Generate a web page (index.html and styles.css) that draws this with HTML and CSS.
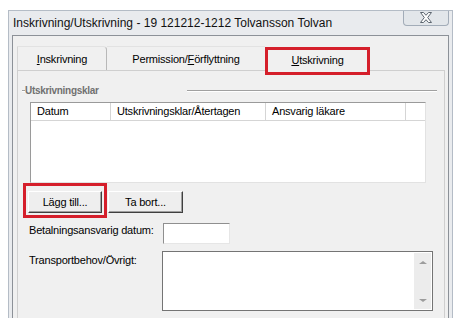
FILE: index.html
```html
<!DOCTYPE html>
<html lang="sv">
<head>
    <meta charset="UTF-8">
    <title>Inskrivning/Utskrivning</title>
    <link rel="stylesheet" href="styles.css">
</head>
<body>

    <div class="window">
        <div class="titlebar">
            <span class="title">Inskrivning/Utskrivning - 19 121212-1212 Tolvansson Tolvan</span>
            <div class="close">
                <svg width="14" height="11" viewBox="0 0 14 11">
                    <path d="M1.5 0.5 L4.5 0.5 L7 3.3 L9.5 0.5 L12.5 0.5 L8.7 5.5 L12.5 10.5 L9.5 10.5 L7 7.7 L4.5 10.5 L1.5 10.5 L5.3 5.5 Z" fill="#fff" stroke="#5d6670" stroke-width="1" stroke-linejoin="round"/>
                </svg>
            </div>
        </div>

        <div class="client">
            <div class="tabs">
                <div class="tab tab-first"><u>I</u>nskrivning</div>
                <div class="tab tab-second">Permission/<u>F</u>örflyttning</div>
                <div class="tab tab-active"><u>U</u>tskrivning</div>
            </div>

            <div class="panel">
                <div class="group-title">
                    <span class="dash"></span>
                    <span class="group-label">Utskrivningsklar</span>
                    <span class="rule"></span>
                </div>

                <div class="list">
                    <div class="list-header">
                        <div class="col col-date">Datum</div>
                        <div class="col col-status">Utskrivningsklar/Återtagen</div>
                        <div class="col col-doctor">Ansvarig läkare</div>
                        <div class="col col-fill"></div>
                    </div>
                </div>

                <div class="button-row">
                    <div class="highlight">
                        <button class="button btn-add">Lägg till...</button>
                    </div>
                    <button class="button btn-remove">Ta bort...</button>
                </div>

                <div class="form-row">
                    <label class="form-label">Betalningsansvarig datum:</label>
                    <div class="field field-date"></div>
                </div>

                <div class="form-row">
                    <label class="form-label label-transport">Transportbehov/Övrigt:</label>
                    <div class="memo">
                        <div class="scrollbar">
                            <span class="arrow-up"></span>
                            <span class="arrow-down"></span>
                        </div>
                    </div>
                </div>

                <div class="form-row">
                    <span class="form-label"></span>
                    <div class="field field-next"></div>
                </div>
            </div>
        </div>
    </div>

</body>
</html>
```

FILE: styles.css
```css
html, body {
    overflow: hidden;
}
body {
    margin: 0;
    background: #fff;
    font-family: "Liberation Sans", Arial, sans-serif;
    font-size: 11px;
    letter-spacing: -0.2px;
    color: #000;
}
.window {
    margin: 10px 0 0 8px;
    width: 445px;
    height: 308px;
    box-sizing: border-box;
    background: #e9ebee;
    border: 1px solid #b4bcc6;
    border-bottom: none;
    padding: 0 3px 0 3px;
    overflow: hidden;
}
.titlebar {
    height: 24px;
    display: flex;
    align-items: center;
}
.title {
    padding-left: 1px;
    font-size: 12px;
    letter-spacing: 0;
    color: #111;
}
.close {
    margin-left: auto;
    align-self: flex-start;
    margin-top: -1px;
    width: 46px;
    height: 16px;
    box-sizing: border-box;
    border: 1px solid #a2acb8;
    border-top: none;
    border-radius: 0 0 4px 4px;
    background: #e2e6ea;
    display: flex;
    align-items: center;
    justify-content: center;
}
.client {
    background: #f0f0f0;
    border: 1px solid #8c9198;
    border-bottom: none;
    height: 273px;
    padding: 10px 3px 0 4px;
    overflow: hidden;
}
.tabs {
    display: flex;
    height: 24px;
    align-items: flex-start;
}
.tab {
    height: 24px;
    box-sizing: border-box;
    display: flex;
    align-items: center;
    justify-content: center;
    padding-top: 1px;
}
.tab-first {
    width: 90px;
    border-left: 1px solid #d6d6d6;
    border-top: 1px solid #e2e2e2;
    border-right: 1px solid #b8b8b8;
    border-radius: 0 4px 0 0;
}
.tab-second {
    width: 158px;
    border-top: 1px solid #e2e2e2;
}
.tab-active {
    width: 105px;
    height: 28px;
    margin-top: 1px;
    border: 3px solid #d51f2b;
    background: #f0f0f0;
    position: relative;
    z-index: 1;
    padding-top: 0;
    padding-bottom: 2px;
}
.panel {
    width: 428px;
    height: 260px;
    box-sizing: border-box;
    border: 1px solid #cfcfcf;
    background: #f0f0f0;
    padding-top: 13px;
}
.group-title {
    display: flex;
    align-items: center;
    height: 13px;
    padding-left: 4px;
}
.dash {
    width: 3px;
    border-top: 1px solid #a0a0a0;
    border-bottom: 1px solid #fff;
}
.group-label {
    width: 162px;
    font-weight: bold;
    font-size: 10px;
    letter-spacing: -0.3px;
    color: #707070;
}
.rule {
    width: 250px;
    border-top: 1px solid #a0a0a0;
    border-bottom: 1px solid #fff;
}
.list {
    margin: 5px 0 0 12px;
    width: 396px;
    height: 81px;
    box-sizing: border-box;
    background: #fff;
    border: 1px solid #e2e2e2;
    border-top-color: #9a9a9a;
    border-left-color: #9a9a9a;
}
.list-header {
    display: flex;
    height: 17px;
    border-bottom: 1px solid #d5d5d5;
}
.col {
    box-sizing: border-box;
    border-right: 1px solid #d5d5d5;
    padding-left: 6px;
    line-height: 16px;
}
.col-date {
    width: 80px;
}
.col-status {
    width: 155px;
}
.col-doctor {
    width: 140px;
}
.col-fill {
    flex: 1;
    border-right: none;
}
.button-row {
    display: flex;
    align-items: flex-start;
    padding-left: 5px;
}
.highlight {
    border: 3px solid #d51f2b;
    padding: 5px 2px 2px 2px;
}
.button {
    height: 22px;
    box-sizing: border-box;
    font-family: inherit;
    font-size: 11px;
    letter-spacing: -0.2px;
    color: #000;
    background: #eeeeee;
    border: 1px solid;
    border-color: #fff #404040 #404040 #fff;
    box-shadow: inset -1px -1px #a0a0a0;
    padding: 0;
}
.btn-add {
    width: 74px;
    display: block;
}
.btn-remove {
    width: 75px;
    margin: 8px 0 0 1px;
}
.form-row {
    display: flex;
    align-items: flex-start;
    padding-left: 11px;
    margin-top: 5px;
}
.form-label {
    width: 134px;
    padding-top: 1px;
}
.label-transport {
    padding-top: 5px;
}
.field {
    height: 21px;
    box-sizing: border-box;
    background: #fff;
    border: 1px solid;
    border-color: #8f8f8f #e6e6e6 #e6e6e6 #8f8f8f;
}
.field-date {
    width: 67px;
}
.memo {
    margin: 2px 0 0 -1px;
    width: 271px;
    height: 60px;
    box-sizing: border-box;
    background: #fff;
    border: 1px solid #747474;
    display: flex;
    justify-content: flex-end;
    padding: 1px 1px 1px 0;
}
.scrollbar {
    width: 17px;
    background: #ececec;
    display: flex;
    flex-direction: column;
    justify-content: space-between;
    align-items: center;
    padding: 8px 0 7px;
    box-sizing: border-box;
}
.arrow-up {
    border-left: 4px solid transparent;
    border-right: 4px solid transparent;
    border-bottom: 3px solid #9c9c9c;
}
.arrow-down {
    border-left: 4px solid transparent;
    border-right: 4px solid transparent;
    border-top: 3px solid #9c9c9c;
}
.field-next {
    width: 66px;
    margin-top: 2px;
    border-top: 2px solid #6a6a6a;
}
```
